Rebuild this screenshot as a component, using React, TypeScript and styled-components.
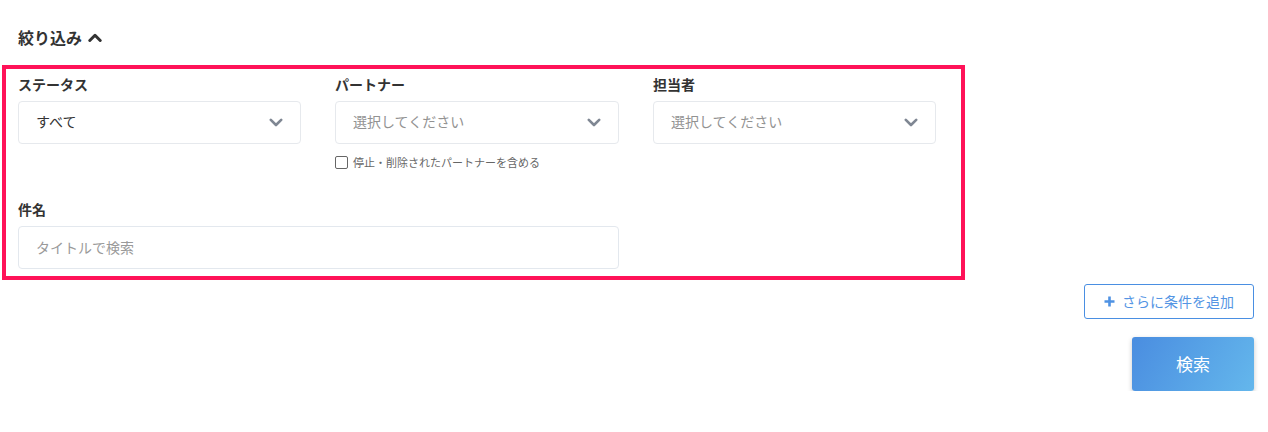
import React from "react";
import styled, { createGlobalStyle } from "styled-components";

const Global = createGlobalStyle`
  html, body { margin: 0; padding: 0; background: #fff; }
  body { font-family: "Noto Sans CJK JP", "Noto Sans", sans-serif; color: #333; }
  * { box-sizing: border-box; }
`;

const Page = styled.div`
  padding: 25px 14px 0 2px;
  display: flex;
  flex-direction: column;
`;

const Header = styled.div`
  display: flex;
  align-items: center;
  gap: 6px;
  padding-left: 16px;
  height: 24px;
  margin-bottom: 16px;
  font-size: 16px;
  font-weight: 700;
  color: #333;
`;

const Frame = styled.div`
  width: 963px;
  border: 4px solid #ff1258;
  padding: 5px 12px 7px 12px;
  display: grid;
  grid-template-columns: 283px 284px 283px;
  column-gap: 34px;
  row-gap: 29px;
  align-items: start;
`;

const Field = styled.div<{ $span?: number }>`
  display: flex;
  flex-direction: column;
  grid-column: span ${(p) => p.$span ?? 1};
`;

const Label = styled.div`
  font-size: 14px;
  font-weight: 700;
  line-height: 20px;
  height: 20px;
  margin-bottom: 7px;
  color: #333;
`;

const SelectBox = styled.div<{ $placeholder?: boolean }>`
  height: 43px;
  border: 1px solid #e6e9ed;
  border-radius: 4px;
  display: flex;
  align-items: center;
  justify-content: space-between;
  padding: 0 17px 3px 17px;
  font-size: 14px;
  color: ${(p) => (p.$placeholder ? "#929292" : "#333")};

  svg {
    margin-top: 3px;
  }
`;

const TextInput = styled.div`
  height: 43px;
  border: 1px solid #e3e8ee;
  border-radius: 4px;
  display: flex;
  align-items: center;
  padding: 0 17px 2px 17px;
  font-size: 14px;
  color: #9a9a9a;
`;

const CheckRow = styled.div`
  display: flex;
  align-items: center;
  gap: 5px;
  margin-top: 10px;
  height: 16px;
  font-size: 11px;
  color: #666;
`;

const CheckBox = styled.span`
  width: 13px;
  height: 13px;
  border: 1px solid #666;
  border-radius: 2px;
  background: #fff;
  display: inline-block;
`;

const Actions = styled.div`
  display: flex;
  flex-direction: column;
  align-items: flex-end;
  margin-top: 4px;
`;

const AddButton = styled.button`
  height: 35px;
  width: 170px;
  border: 1px solid #4a8fe2;
  border-radius: 3px;
  background: #fff;
  color: #5495e4;
  font-family: inherit;
  font-size: 14px;
  display: flex;
  align-items: center;
  justify-content: center;
  gap: 7px;
  padding: 0 0 1px 0;
`;

const SearchButton = styled.button`
  margin-top: 18px;
  height: 54px;
  width: 122px;
  border: none;
  border-radius: 3px;
  background: linear-gradient(120deg, #4a8de0 0%, #64b7ec 100%);
  color: #fff;
  font-family: inherit;
  font-size: 17px;
  padding-bottom: 2px;
  box-shadow: 0 2px 5px rgba(0, 0, 0, 0.22);
`;

const Chevron = ({ up }: { up?: boolean }) => (
  <svg width="14" height="9" viewBox="0 0 14 9" fill="none">
    <path
      d={up ? "M1.8 7.5 L7 2.3 L12.2 7.5" : "M1.8 1.8 L7 7 L12.2 1.8"}
      stroke={up ? "#333" : "#7f8793"}
      strokeWidth={up ? 3 : 2.6}
      strokeLinecap="round"
      strokeLinejoin="round"
    />
  </svg>
);

const Plus = () => (
  <svg width="11" height="11" viewBox="0 0 11 11">
    <path d="M5.5 0.5 V10.5 M0.5 5.5 H10.5" stroke="#4f92e3" strokeWidth="2.6" />
  </svg>
);

export default function App() {
  return (
    <>
      <Global />
      <Page>
        <Header>
          絞り込み
          <Chevron up />
        </Header>
        <Frame>
          <Field>
            <Label>ステータス</Label>
            <SelectBox>
              すべて
              <Chevron />
            </SelectBox>
          </Field>
          <Field>
            <Label>パートナー</Label>
            <SelectBox $placeholder>
              選択してください
              <Chevron />
            </SelectBox>
            <CheckRow>
              <CheckBox />
              停止・削除されたパートナーを含める
            </CheckRow>
          </Field>
          <Field>
            <Label>担当者</Label>
            <SelectBox $placeholder>
              選択してください
              <Chevron />
            </SelectBox>
          </Field>
          <Field $span={2}>
            <Label>件名</Label>
            <TextInput>タイトルで検索</TextInput>
          </Field>
        </Frame>
        <Actions>
          <AddButton>
            <Plus />
            さらに条件を追加
          </AddButton>
          <SearchButton>検索</SearchButton>
        </Actions>
      </Page>
    </>
  );
}
